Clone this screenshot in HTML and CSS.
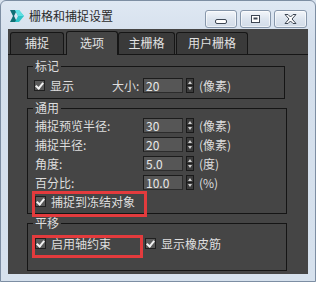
FILE: index.html
```html
<!DOCTYPE html>
<html lang="zh-CN">
<head>
<meta charset="utf-8">
<title>栅格和捕捉设置</title>
<link rel="stylesheet" href="styles.css">
</head>
<body>
<div class="window">
  <div class="titlebar">
    <svg class="appicon" width="16" height="14" viewBox="0 0 16 14">
      <path d="M1 1 L8 1 L5 7 L8 13 L1 13 L4 7 Z" fill="#0f6f74"/>
      <path d="M6 1 L10 1 L15 7 L10 13 L6 13 L9 7 Z" fill="#2ec4c9"/>
      <path d="M6 1 L10 1 L15 7 L9 7 Z" fill="#5fe0e3"/>
    </svg>
    <span class="title">栅格和捕捉设置</span>
    <div class="capbtns">
      <div class="capbtn">
        <svg width="30" height="16" viewBox="0 0 30 16"><rect x="9.5" y="8.5" width="11" height="4" rx="1.5" fill="#fff" stroke="#3d4653"/></svg>
      </div>
      <div class="capbtn">
        <svg width="29" height="16" viewBox="0 0 29 16"><rect x="10.5" y="4.5" width="8" height="7" fill="#fff" stroke="#3d4653"/><rect x="12.5" y="6.5" width="4" height="2" fill="#3d4653"/></svg>
      </div>
      <div class="capbtn close">
        <svg width="31" height="16" viewBox="0 0 31 16"><path d="M10 3.5 L13 3.5 L15.5 6 L18 3.5 L21 3.5 L17 8 L21 12.5 L18 12.5 L15.5 10 L13 12.5 L10 12.5 L14 8 Z" fill="#fff" stroke="#3d4653" stroke-width="1" stroke-linejoin="round"/></svg>
      </div>
    </div>
  </div>
  <div class="client">
    <div class="tabs">
      <div class="tab t1">捕捉</div>
      <div class="tab t2 active">选项</div>
      <div class="tab t3">主栅格</div>
      <div class="tab t4">用户栅格</div>
    </div>
    <div class="panel">
      <fieldset class="group g1">
        <legend>标记</legend>
        <div class="row first3">
          <label class="check w79"><span class="cb"></span>显示</label>
          <span class="lbl-size">大小:</span>
          <span class="num">20</span><span class="spin"></span><span class="unit">(像素)</span>
        </div>
      </fieldset>
      <fieldset class="group g2">
        <legend>通用</legend>
        <div class="row first1">
          <span class="lbl">捕捉预览半径:</span>
          <span class="num">30</span><span class="spin"></span><span class="unit">(像素)</span>
        </div>
        <div class="row">
          <span class="lbl">捕捉半径:</span>
          <span class="num">20</span><span class="spin"></span><span class="unit">(像素)</span>
        </div>
        <div class="row">
          <span class="lbl">角度:</span>
          <span class="num">5.0</span><span class="spin"></span><span class="unit">(度)</span>
        </div>
        <div class="row">
          <span class="lbl">百分比:</span>
          <span class="num">10.0</span><span class="spin"></span><span class="unit">(%)</span>
        </div>
        <div class="row">
          <label class="check mark1"><span class="cb"></span>捕捉到冻结对象</label>
        </div>
      </fieldset>
      <fieldset class="group g3">
        <legend>平移</legend>
        <div class="row first4">
          <label class="check w110 mark2"><span class="cb"></span>启用轴约束</label>
          <label class="check second"><span class="cb"></span>显示橡皮筋</label>
        </div>
      </fieldset>
    </div>
  </div>
</div>
</body>
</html>
```
FILE: styles.css
```css
html, body {
  margin: 0;
  padding: 0;
  background: #d8e2ee;
}
body {
  font-family: "Noto Sans CJK SC", "Noto Sans", sans-serif;
  font-size: 12px;
}
.window {
  width: 316px;
  height: 282px;
  box-sizing: border-box;
  border: 1px solid #7d8ea3;
  border-radius: 6px 6px 0 0;
  background: linear-gradient(#dfe8f3, #d4dfec 40px, #d6e1ed);
  display: flex;
  flex-direction: column;
}
.titlebar {
  height: 28px;
  display: flex;
  align-items: center;
  padding-left: 8px;
  padding-top: 2px;
  box-sizing: border-box;
}
.appicon {
  flex: none;
}
.title {
  margin-left: 4px;
  color: #2b2b2b;
  line-height: 16px;
}
.capbtns {
  margin-left: auto;
  margin-right: 8px;
  align-self: flex-start;
  margin-top: 7px;
  display: flex;
  gap: 3px;
}
.capbtn {
  height: 16px;
  border: 1px solid #8797ab;
  border-radius: 3px;
  background: linear-gradient(#f3f6fa, #dde5ef 50%, #d2dce8);
  box-shadow: inset 0 0 0 1px rgba(255,255,255,0.6);
}
.capbtn svg {
  display: block;
}
.client {
  margin: 0 7px 7px 7px;
  flex: 1;
  background: #454545;
  display: flex;
  flex-direction: column;
}
.tabs {
  height: 25px;
  display: flex;
  align-items: flex-end;
  padding-left: 2px;
  box-sizing: border-box;
  position: relative;
  z-index: 1;
}
.tab {
  height: 22px;
  box-sizing: border-box;
  border: 1px solid #161616;
  border-bottom: none;
  border-radius: 3px 3px 0 0;
  background: #3a3a3a;
  color: #e2e2e2;
  text-align: center;
  line-height: 20px;
}
.tab.active {
  height: 24px;
  margin-bottom: -1px;
  background: #454545;
  line-height: 22px;
}
.t1 { width: 54px; }
.t2 { width: 52px; margin-left: 2px; }
.t3 { width: 57px; }
.t4 { width: 72px; margin-left: 1px; }
.panel {
  flex: 1;
  border-top: 1px solid #161616;
  padding-top: 2px;
}
.group {
  margin: 2px 21px 0 19px;
  padding: 0 5px 0 5px;
  border: 1px solid #151515;
  min-inline-size: 0;
}
.g1 {
  margin-top: 2px;
  margin-right: 23px;
  padding-bottom: 3px;
}
.g2 {
  padding-bottom: 2px;
}
.g3 {
  padding-bottom: 17px;
}
legend {
  padding: 0 2px;
  line-height: 14px;
  height: 14px;
  color: #dedede;
}
.row {
  display: flex;
  align-items: center;
  height: 19px;
  color: #dedede;
}
.first3 { margin-top: 3px; }
.first1 { margin-top: 1px; }
.first4 { margin-top: 4px; }
.lbl {
  width: 110px;
  padding-left: 2px;
  box-sizing: border-box;
  line-height: 14px;
}
.lbl-size {
  width: 31px;
  line-height: 14px;
}
.num {
  width: 40px;
  height: 15px;
  box-sizing: border-box;
  background: #565656;
  border: 1px solid #1c1c1c;
  border-right-color: #2c2c2c;
  border-bottom-color: #2c2c2c;
  color: #e8e8e8;
  padding-left: 2px;
  line-height: 13px;
  font-size: 12px;
}
.spin {
  width: 8px;
  height: 15px;
  margin-left: 3px;
  box-sizing: border-box;
  border: 1px solid #1a1a1a;
  background:
    linear-gradient(to bottom, transparent 6px, #1e1e1e 6px, #1e1e1e 7px, transparent 7px),
    #3b3b3b;
  position: relative;
}
.spin::before,
.spin::after {
  content: "";
  position: absolute;
  left: 1px;
  border-left: 2px solid transparent;
  border-right: 2px solid transparent;
}
.spin::before {
  top: 2px;
  border-bottom: 3px solid #d0d0d0;
}
.spin::after {
  bottom: 2px;
  border-top: 3px solid #d0d0d0;
}
.unit {
  margin-left: 5px;
  line-height: 14px;
}
.check {
  display: flex;
  align-items: center;
  line-height: 14px;
  position: relative;
}
.w79 { width: 79px; }
.w110 { width: 110px; }
.cb {
  width: 11px;
  height: 11px;
  box-sizing: border-box;
  margin-left: 2px;
  margin-right: 5px;
  border: 1px solid #202020;
  background: #5a5a5a;
  position: relative;
  flex: none;
}
.g1 .cb { margin-left: 1px; }
.cb::after {
  content: "";
  position: absolute;
  left: 2px;
  top: 0px;
  width: 3px;
  height: 6px;
  border-right: 2px solid #f2f2f2;
  border-bottom: 2px solid #f2f2f2;
  transform: rotate(40deg);
}
.second .cb {
  margin-left: 2px;
}
.mark1::after,
.mark2::after {
  content: "";
  position: absolute;
  box-sizing: border-box;
  border: 3px solid #e33b3d;
  pointer-events: none;
}
.mark1::after {
  left: -1px;
  top: -4px;
  width: 115px;
  height: 26px;
}
.mark2::after {
  left: -1px;
  top: -2px;
  width: 111px;
  height: 23px;
}
```
